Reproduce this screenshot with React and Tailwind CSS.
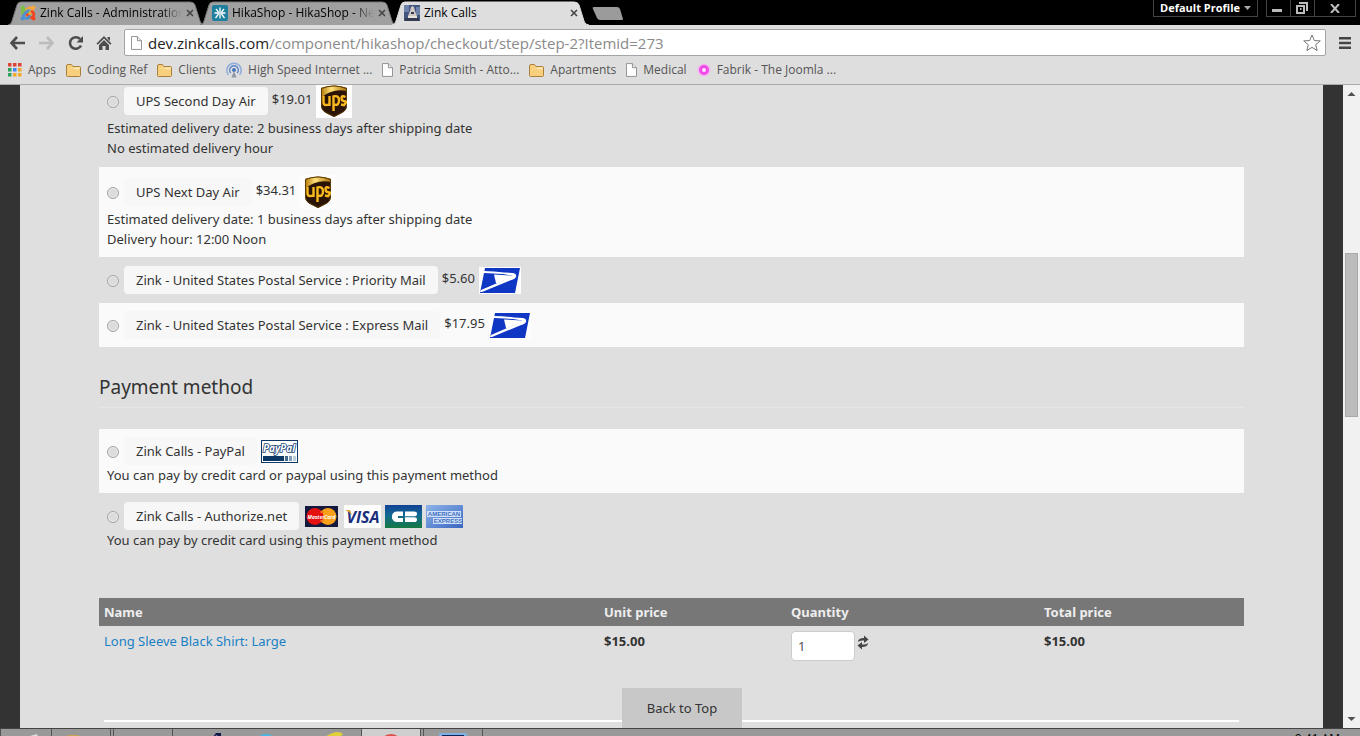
const JoomlaIcon = () => (
  <svg width="16" height="16" viewBox="0 0 16 16" fill="none" strokeWidth="2.600" strokeLinecap="round">
    <path d="M4 9.500L2.500 8Q1.500 6 3.500 4.500Q5.500 3.500 7 5.500L10.500 9" stroke="#7ac143" />
    <path d="M6.500 4.500L8.500 3Q10.500 1.800 12 3.500Q13.200 5.500 11.500 7L8 10.500" stroke="#f9a541" />
    <path d="M12 6.500L13.500 8Q14.500 10.500 12.500 12Q10.500 13 9 11.500L5.500 8" stroke="#f44321" />
    <path d="M9.500 11.500L8 13Q5.500 14 4 12.500Q2.500 10.500 4.500 9L8 5.500" stroke="#5091cd" />
    <g fill="#f44321">
      <circle cx="13.500" cy="13.500" r="2" />
      <circle cx="2.500" cy="2.500" r="2" fill="#7ac143" />
      <circle cx="13.500" cy="2.500" r="2" fill="#f9a541" />
      <circle cx="2.500" cy="13.500" r="2" fill="#5091cd" />
    </g>
  </svg>
);

const HikaIcon = () => (
  <svg width="16" height="16" viewBox="0 0 16 16">
    <rect width="16" height="16" rx="2" fill="#1f7f9e" />
    <path d="M8 2.500V7M4 4l2.500 3M12 4L9.500 7M2.500 8h11M6.500 9L3.500 13M8 9v4.500M9.500 9l3 4" stroke="#fff" strokeWidth="1.300" fill="none" />
  </svg>
);

const ZinkIcon = () => (
  <svg width="16" height="16" viewBox="0 0 16 16">
    <rect width="16" height="16" fill="#41557f" />
    <path d="M0 0h5v7H0zM12 2h4v8h-4z" fill="#6d82ab" />
    <path d="M8.500 1l1.500 1 1 4 2 5v2H4v-2l2-5 1-4z" fill="#cfc8c4" />
    <path d="M7 7h3v2H7zM1 13h14v3H1z" fill="#353c52" />
    <path d="M4 11h9v2H4z" fill="#e9e3dd" />
  </svg>
);

const PageIcon = () => (
  <svg width="11" height="14" viewBox="0 0 12 15" fill="#fff" stroke="#8a8a8a">
    <path d="M.5.5h6.500l4.500 4.500v9.500H.5z" />
    <path d="M7 .5V5h4.500" fill="#e8e8e8" />
  </svg>
);

const FolderIcon = () => (
  <svg width="15" height="13" viewBox="0 0 15 13">
    <path d="M.5 2Q.5.500 2 .5h3.500l1.500 2h6.500q1 0 1 1v8q0 1-1 1h-12q-1 0-1-1z" fill="#f8cf7c" stroke="#a9803f" />
    <path d="M1.500 4.500h6l1.500-1h4.500v2z" fill="#fde9b9" />
  </svg>
);

const AppsIcon = () => (
  <svg width="14" height="14" viewBox="0 0 14 14">
    <path d="M0 0h3.500v3.500H0zM5 0h3.500v3.500H5zM10 0h3.500v3.500H10z" fill="#db4437" />
    <path d="M0 5h3.500v3.500H0z" fill="#2ba25c" />
    <path d="M5 5h3.500v3.500H5z" fill="#4285f4" />
    <path d="M10 5h3.500v3.500H10zM5 10h3.500v3.500H5zM10 10h3.500v3.500H10z" fill="#f0a92a" />
    <path d="M0 10h3.500v3.500H0z" fill="#2ba25c" />
  </svg>
);

const AntennaIcon = () => (
  <svg width="16" height="16" viewBox="0 0 16 16" fill="none" stroke="#8fabd9" strokeWidth="1.500">
    <path d="M2.500 13a7.200 7.200 0 1 1 11 0" />
    <path d="M4.800 11a4.300 4.300 0 1 1 6.400 0" stroke="#5f87c8" />
    <circle cx="8" cy="8" r="2" fill="#4a76bd" stroke="none" />
    <path d="M8 9l-2.500 6.500h5z" fill="#8c97a8" stroke="none" />
  </svg>
);

const FabrikIcon = () => (
  <svg width="14" height="14" viewBox="0 0 14 14">
    <circle cx="7" cy="7" r="6.500" fill="#f6b6f3" />
    <circle cx="7" cy="7" r="3.500" fill="#ffe3ff" stroke="#f04be9" strokeWidth="3" />
  </svg>
);

const UpsLogo = () => (
  <svg role="img" aria-label="UPS" width="36" height="34" viewBox="0 0 36 34" className="shrink-0">
    <defs>
      <linearGradient id="gold" x1="0" x2="1">
        <stop offset="0" stopColor="#b47a08" />
        <stop offset=".4" stopColor="#ffe27a" />
        <stop offset="1" stopColor="#a86c04" />
      </linearGradient>
    </defs>
    <rect width="36" height="34" fill="#fdfdfd" />
    <path d="M5 4q13-5 26 0v17q0 6-6 8.500l-7 3.500-7-3.500Q5 27 5 21z" fill="#2a1405" />
    <path d="M5 4q13-5 26 0v3Q17 4 6 13H5z" fill="url(#gold)" />
    <path d="M5.500 4.500q12.500-5 25 0v16.500q0 5.500-5.500 8l-7 3.500-7-3.500q-5.500-2.500-5.500-8z" fill="none" stroke="#5c3905" />
    <g fill="none" stroke="#f8b91f" strokeWidth="2.400">
      <path d="M7.500 12v6.500q0 2.500 2.500 2.500t3.500-1M13.500 12v10" />
      <path d="M17.500 27V12.500q5.500-1.500 5.500 4t-5 4" />
      <path d="M29.500 13q-4-2-4 1t3 3.200-.5 4l-3-.700" />
    </g>
  </svg>
);

const UspsLogo = () => (
  <svg role="img" aria-label="USPS" width="42" height="27" viewBox="0 0 42 27" className="shrink-0">
    <rect width="42" height="27" fill="#fdfdfd" />
    <path d="M6 1h35l-5 25H1z" fill="#1036c4" />
    <path d="M5 4q10 0 20 1.500l9 .5q4 1 3 4-1 2-6 3.500L3 25H1l1-2 28-12 3-2.500-9-1.500L5 6z" fill="#fff" />
    <path d="M15 7.500l18 1-2 2.500-12 5h-2z" fill="#fff" />
  </svg>
);

const PaypalLogo = () => (
  <svg role="img" aria-label="PayPal" width="37" height="23" viewBox="0 0 37 23" className="shrink-0">
    <rect x=".5" y=".5" width="36" height="22" fill="#fff" stroke="#0d3764" />
    <text x="18" y="12" textAnchor="middle" fontFamily="Open Sans, sans-serif" fontSize="10" fontWeight="700" fontStyle="italic" fill="#fff" stroke="#153f70" strokeWidth="1.600" paintOrder="stroke">PayPal</text>
    <path d="M2 16h21v5H2z" fill="#0d3764" />
    <path d="M24 16h3v5h-3z" fill="#41688f" />
    <path d="M28 16h3v5h-3z" fill="#7f9db8" />
    <path d="M32 16h3v5h-3z" fill="#bccddc" />
  </svg>
);

const MastercardLogo = () => (
  <svg role="img" aria-label="MasterCard" width="37" height="23" viewBox="0 0 37 23" className="shrink-0">
    <rect x="2" y="1" width="33" height="21" fill="#14183c" />
    <circle cx="25" cy="11.500" r="8.500" fill="#f9a01b" />
    <circle cx="12" cy="11.500" r="8.500" fill="#e3100f" />
    <path d="M17.500 6h3v2h-3zm0 9h3v2h-3z" fill="#f37a1a" />
    <text x="18.500" y="13.500" textAnchor="middle" fontFamily="Open Sans, sans-serif" fontSize="5" fontWeight="700" fontStyle="italic" fill="#fff">MasterCard</text>
  </svg>
);

const VisaLogo = () => (
  <svg role="img" aria-label="Visa" width="37" height="23" viewBox="0 0 37 23" className="shrink-0">
    <rect width="37" height="23" fill="#fdfdfd" />
    <text x="19" y="18" textAnchor="middle" fontFamily="Open Sans, sans-serif" fontSize="16" fontWeight="700" fontStyle="italic" fill="#1b2f7c">VISA</text>
    <path d="M1 5h5l2 5q-2-3-7-5z" fill="#e9a53a" />
  </svg>
);

const CbLogo = () => (
  <svg role="img" aria-label="Carte Bancaire" width="37" height="23" viewBox="0 0 37 23" className="shrink-0">
    <defs>
      <linearGradient id="cb" x1="0" y1="0" x2="0" y2="1">
        <stop offset="0" stopColor="#124296" />
        <stop offset=".45" stopColor="#106a92" />
        <stop offset="1" stopColor="#157a42" />
      </linearGradient>
    </defs>
    <rect width="37" height="23" fill="url(#cb)" />
    <path d="M18 6.500H11.500a5.300 5.300 0 0 0 0 10.500H18v-4h-5v-2h5z" fill="#fff" />
    <path d="M20 6.500h9q3 0 3 2.400T29 11.300h-9zM20 12.300h9q3 0 3 2.400T29 17h-9z" fill="#fff" />
  </svg>
);

const AmexLogo = () => (
  <svg role="img" aria-label="American Express" width="37" height="23" viewBox="0 0 37 23" className="shrink-0">
    <defs>
      <linearGradient id="amex" x1="0" y1="0" x2="1" y2="1">
        <stop offset="0" stopColor="#8db4ea" />
        <stop offset="1" stopColor="#3a66c0" />
      </linearGradient>
    </defs>
    <rect width="37" height="23" fill="url(#amex)" />
    <path d="M1 6h34v6H1zM7 13h29v6H7z" fill="#cfe0f7" />
    <g fontFamily="Liberation Sans, sans-serif" fontSize="6" fontWeight="700" fill="#3f6fc4">
      <text x="18" y="11" textAnchor="middle">AMERICAN</text>
      <text x="22" y="18" textAnchor="middle">EXPRESS</text>
    </g>
  </svg>
);

const tabs = [
  { title: 'Zink Calls - Administration', Icon: JoomlaIcon },
  { title: 'HikaShop - HikaShop - New', Icon: HikaIcon },
  { title: 'Zink Calls', Icon: ZinkIcon, active: true },
];

const bookmarks = [
  { title: 'Apps', Icon: AppsIcon },
  { title: 'Coding Ref', Icon: FolderIcon },
  { title: 'Clients', Icon: FolderIcon },
  { title: 'High Speed Internet ...', Icon: AntennaIcon },
  { title: 'Patricia Smith - Atto...', Icon: PageIcon },
  { title: 'Apartments', Icon: FolderIcon },
  { title: 'Medical', Icon: PageIcon },
  { title: 'Fabrik - The Joomla ...', Icon: FabrikIcon },
];

const Tab = ({ title, Icon, active }) => (
  <div className="relative -mr-2 h-6 w-50">
    <svg className="absolute inset-0 h-6 w-full" viewBox="0 0 200 24" preserveAspectRatio="none">
      <path
        d="M0 24Q3 24 4 20L9 4Q10 1 13 1H182Q186 1 187 4L192 20Q193 24 197 24"
        fill={active ? '#dedede' : '#a0a0a0'}
        stroke={active ? '#dedede' : '#777'}
      />
    </svg>
    <div className="relative flex h-6 items-center gap-1 pr-3 pl-3 text-xs text-black">
      <Icon />
      <span
        className={
          active
            ? 'flex-1 overflow-hidden whitespace-nowrap'
            : 'flex-1 overflow-hidden whitespace-nowrap mask-r-from-85%'
        }
      >
        {title}
      </span>
      <button aria-label="Close tab" className="pr-0.5">
        <svg width="8" height="8" viewBox="0 0 8 8" stroke="#444" strokeWidth="1.600">
          <path d="M1 1l6 6M7 1L1 7" />
        </svg>
      </button>
    </div>
  </div>
);

const TitleBar = () => (
  <div className="flex h-[25px] items-end bg-black pl-2">
    {tabs.map((tab) => (
      <Tab key={tab.title} {...tab} />
    ))}
    <button aria-label="New tab" className="mb-1 ml-2">
      <svg width="32" height="16" viewBox="0 0 32 16">
        <path d="M1 4Q0 2 2 2H25Q27 2 28 4L31 14Q31 15 30 15H8Q6 15 5 13z" fill="#9b9b9b" />
      </svg>
    </button>
    <div className="ml-auto flex gap-2 self-start pr-1">
      <button className="flex h-[17px] items-center gap-1 border border-t-0 border-[#444] px-1.5 font-['Open_Sans'] text-[11px] font-bold text-white">
        Default Profile
        <svg width="7" height="4" viewBox="0 0 7 4" fill="#aaa">
          <path d="M0 0h7L3.500 4z" />
        </svg>
      </button>
      <div className="flex h-[17px] divide-x divide-[#444] border border-t-0 border-[#444]">
        <button aria-label="Minimize" className="w-6 pl-1">
          <svg width="14" height="14" viewBox="0 0 14 14">
            <path d="M1 8h10v3H1z" fill="#bbb" />
          </svg>
        </button>
        <button aria-label="Restore" className="w-6 pl-1">
          <svg width="14" height="14" viewBox="0 0 14 14" fill="none" stroke="#bbb" strokeWidth="2">
            <path d="M2 5h7v7H2zM4 2h8v8" />
            <path d="M5 8h1.500" />
          </svg>
        </button>
        <button aria-label="Close" className="flex w-10 items-center justify-center">
          <svg width="10" height="9" viewBox="0 0 10 9" stroke="#bbb" strokeWidth="2">
            <path d="M1 0l8 9M9 0L1 9" />
          </svg>
        </button>
      </div>
    </div>
  </div>
);

const Toolbar = () => (
  <div className="flex h-9 items-center bg-[#dedede] px-2 pb-px">
    <button aria-label="Back" className="w-7 pl-px">
      <svg width="18" height="16" viewBox="0 0 18 16" fill="none" stroke="#4d4d4d" strokeWidth="2.600">
        <path d="M8 2L2.500 8 8 14M3 8h13" />
      </svg>
    </button>
    <button aria-label="Forward" className="w-7 pl-px">
      <svg width="18" height="16" viewBox="0 0 18 16" fill="none" stroke="#bcbcbc" strokeWidth="2.600">
        <path d="M10 2l5.500 6L10 14M15 8H2" />
      </svg>
    </button>
    <button aria-label="Reload" className="w-8 pl-1">
      <svg width="16" height="16" viewBox="0 0 16 16">
        <path d="M13 10.500A5.800 5.800 0 1 1 12 4" fill="none" stroke="#4d4d4d" strokeWidth="2.600" />
        <path d="M15 1v6.500H8.500z" fill="#4d4d4d" />
      </svg>
    </button>
    <button aria-label="Home" className="w-7">
      <svg width="16" height="16" viewBox="0 0 16 16" fill="#4d4d4d">
        <path d="M8 1l7.500 7.500-1.200 1.200L8 3.500 1.700 9.700.5 8.500zM11.500 2H14v4l-2.500-2.500z" />
        <path d="M3 10l5-5 5 5v5H9.500v-4h-3v4H3z" />
      </svg>
    </button>
    <div className="flex h-[27px] flex-1 items-center gap-1.5 rounded-xs border border-[#a5a5a5] bg-white px-1.5">
      <PageIcon />
      <div className="relative flex-1 text-[15px] leading-6">
        <input
          aria-label="Address"
          defaultValue="dev.zinkcalls.com/component/hikashop/checkout/step/step-2?Itemid=273"
          className="block w-full text-transparent outline-none"
        />
        <div className="pointer-events-none absolute inset-0 text-[#8a8a8a]" aria-hidden="true">
          <span className="text-[#222]">dev.zinkcalls.com</span>/component/hikashop/checkout/step/step-2?Itemid=273
        </div>
      </div>
      <button aria-label="Bookmark this page" className="-mr-0.5">
        <svg width="18" height="18" viewBox="0 0 18 18" fill="#fff" stroke="#777">
          <path d="M9 1l2.300 5.500 6 .4-4.600 3.800 1.500 5.800L9 13.400l-5.200 3.100 1.500-5.800L.7 6.900l6-.4z" />
        </svg>
      </button>
    </div>
    <button aria-label="Menu" className="ml-3">
      <svg width="14" height="14" viewBox="0 0 14 14" fill="#444">
        <path d="M1 1h12v2.500H1zM1 5.800h12v2.500H1zM1 10.500h12V13H1z" />
      </svg>
    </button>
  </div>
);

const BookmarksBar = () => (
  <nav className="flex h-6 items-start gap-2.5 border-b border-[#aaa] bg-[#dedede] pl-2 text-xs text-[#555]">
    {bookmarks.map(({ title, Icon }) => (
      <a key={title} href="#" className="flex h-[18px] items-center gap-1.5">
        <Icon />
        {title}
      </a>
    ))}
  </nav>
);

const shipping = [
  {
    id: 'ups2',
    name: 'UPS Second Day Air',
    price: '$19.01',
    logos: [UpsLogo],
    notes: ['Estimated delivery date: 2 business days after shipping date', 'No estimated delivery hour'],
  },
  {
    id: 'ups1',
    name: 'UPS Next Day Air',
    price: '$34.31',
    logos: [UpsLogo],
    notes: ['Estimated delivery date: 1 business days after shipping date', 'Delivery hour: 12:00 Noon'],
  },
  { id: 'priority', name: 'Zink - United States Postal Service : Priority Mail', price: '$5.60', logos: [UspsLogo] },
  { id: 'express', name: 'Zink - United States Postal Service : Express Mail', price: '$17.95', logos: [UspsLogo] },
];

const payments = [
  {
    id: 'paypal',
    name: 'Zink Calls - PayPal',
    logos: [PaypalLogo],
    notes: ['You can pay by credit card or paypal using this payment method'],
  },
  {
    id: 'authorize',
    name: 'Zink Calls - Authorize.net',
    logos: [MastercardLogo, VisaLogo, CbLogo, AmexLogo],
    notes: ['You can pay by credit card using this payment method'],
  },
];

const Option = ({ group, id, name, price, logos, notes = [] }) => (
  <>
    <div className="flex items-center gap-1">
      <input
        type="radio"
        id={id}
        name={group}
        className="mt-0.5 mr-px size-3 shrink-0 appearance-none rounded-full border border-[#a3a3a3] bg-[#dcdcdc] shadow-[inset_0_0_0_1px_#eee] checked:bg-[#555]"
      />
      <label htmlFor={id} className="h-7 rounded bg-[#f7f7f7] px-3 leading-7">
        {name}
      </label>
      {price && <span className="pb-1">{price}</span>}
      {logos.map((Logo, i) => (
        <Logo key={i} />
      ))}
    </div>
    {notes.map((note) => (
      <p key={note}>{note}</p>
    ))}
  </>
);

const Shipping = () => (
  <div className="-mt-px">
    {shipping.map((item, i) => (
      <div
        key={item.id}
        className={
          i === 0
            ? 'px-2 pb-2'
            : 'border-t border-[#ddd] px-2 py-2 even:bg-[#fafafa]'
        }
      >
        <Option group="shipping" {...item} />
      </div>
    ))}
  </div>
);

const Payment = () => (
  <section>
    <h2 className="mt-6 border-b border-[#e6e6e6] pb-1 text-[19px] leading-8">Payment method</h2>
    <div className="mt-5">
      {payments.map((item) => (
        <div key={item.id} className="border-t border-[#ddd] px-2 py-2 odd:bg-[#fafafa]">
          <Option group="payment" {...item} />
        </div>
      ))}
    </div>
  </section>
);

const Cart = () => (
  <table className="mt-10 w-full table-fixed text-left">
    <thead>
      <tr className="h-7 bg-[#777] text-[#eee]">
        <th className="w-[500px] px-[5px]">Name</th>
        <th className="w-[187px] px-[5px]">Unit price</th>
        <th className="w-[253px] px-[5px]">Quantity</th>
        <th className="px-[5px]">Total price</th>
      </tr>
    </thead>
    <tbody>
      <tr className="align-top">
        <td className="px-[5px] pt-[5px]">
          <a href="#" className="text-[#1a80c4]">Long Sleeve Black Shirt: Large</a>
        </td>
        <td className="px-[5px] pt-[5px] font-bold">$15.00</td>
        <td className="px-[5px] pt-[5px]">
          <div className="flex items-start gap-0.5">
            <input
              aria-label="Quantity"
              defaultValue="1"
              className="h-[30px] w-16 rounded border border-[#ccc] bg-white px-1.5 text-[#555]"
            />
            <button aria-label="Refresh quantity" className="pt-1">
              <svg width="12" height="15" viewBox="0 0 12 15" fill="#444">
                <path d="M1 7Q1 3 7 3V.5l4.500 4L7 8V5.500Q3 5 1 7z" />
                <path d="M11 8q0 4-6 4v2.500L.5 10.500 5 7v2.500q4 .5 6-1.500z" />
              </svg>
            </button>
          </div>
        </td>
        <td className="px-[5px] pt-[5px] font-bold">$15.00</td>
      </tr>
    </tbody>
  </table>
);

const Scrollbar = () => (
  <div className="flex w-[17px] shrink-0 flex-col items-center bg-[#f1f1f1]" aria-hidden="true">
    <svg width="17" height="17" viewBox="0 0 17 17" fill="#505050">
      <path d="M4.500 11h8l-4-4z" />
    </svg>
    <div className="grow-151" />
    <div className="w-[13px] grow-163 border border-[#a8a8a8] bg-[#bcbcbc]" />
    <div className="grow-295" />
    <svg width="17" height="17" viewBox="0 0 17 17" fill="#505050">
      <path d="M4.500 6h8l-4 4z" />
    </svg>
  </div>
);

const Taskbar = () => (
  <footer className="flex h-2 shrink-0 overflow-hidden border-t border-[#444] bg-[#999]">
    <svg width="484" height="8" viewBox="0 0 484 8">
      <path d="M361 0h60v8h-60z" fill="#cfcfcf" />
      <path d="M.5 0v8M51.500 0v8M110.500 0v8M113.500 0v8M172.500 0v8M361.500 0v8M420.500 0v8M423.500 0v8M482.500 0v8" stroke="#555" />
      <path d="M30 7l7-2 1 3h-8z" fill="#ddd" />
      <path d="M68 6h10l2 2H67z" fill="#c8a34b" />
      <path d="M213 8l3-4h5v4h-3l-1-2z" fill="#11184a" />
      <path d="M258 8q8-6 16 0z" fill="#45b9e8" />
      <path d="M325 8q12-8 18-3l-3 3z" fill="#e2cf3c" />
      <path d="M383 8q8-6 16 0z" fill="#e0504a" />
      <path d="M439 4h28v4h-28z" fill="#7fb0e0" />
      <path d="M442 6h22v2h-22z" fill="#0b2460" />
    </svg>
    <span className="ml-auto pt-0.5 pr-5 text-xs leading-4 text-black">9:41 AM</span>
  </footer>
);

export default function App() {
  return (
    <div className="flex h-screen flex-col overflow-hidden font-['Open_Sans',sans-serif]">
      <header className="shrink-0">
        <TitleBar />
        <Toolbar />
        <BookmarksBar />
      </header>
      <div className="flex min-h-0 flex-1">
        <div className="min-w-0 flex-1 overflow-hidden bg-[#333] px-5">
          <main className="relative flow-root h-full bg-[#dfdfdf] px-[79px] font-['Noto_Sans',sans-serif] text-[13px] leading-5 text-[#333]">
            <Shipping />
            <Payment />
            <Cart />
            <div className="absolute inset-x-[84px] bottom-1.5 h-0.5 bg-white" />
            <a
              href="#"
              className="absolute bottom-0 left-[602px] flex h-10 w-30 items-center justify-center bg-[#c8c8c8]"
            >
              Back to Top
            </a>
          </main>
        </div>
        <Scrollbar />
      </div>
      <Taskbar />
    </div>
  );
}
